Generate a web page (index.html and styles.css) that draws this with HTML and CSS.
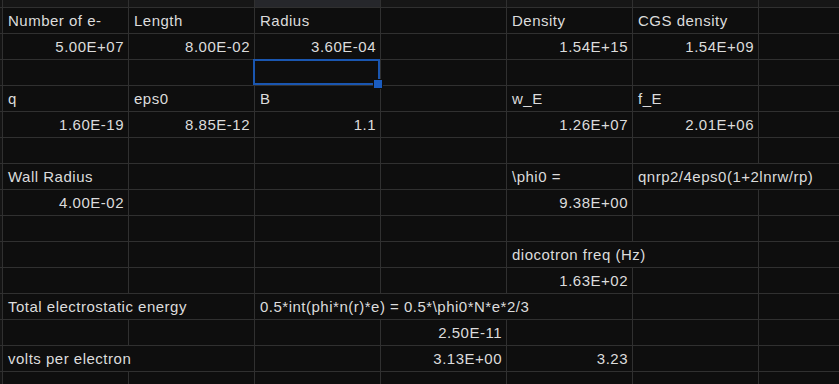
FILE: index.html
```html
<!DOCTYPE html>
<html lang="en">
<head>
    <meta charset="UTF-8">
    <meta name="viewport" content="width=device-width, initial-scale=1.0">
    <title>Electron plasma calc</title>
    <link rel="stylesheet" href="styles.css">
</head>
<body>
    <div class="sheet">
        <!-- column headers (only their bottom edge shows) -->
        <div class="rh"></div>
        <div class="ch"></div><div class="ch"></div><div class="ch sel"></div><div class="ch"></div><div class="ch"></div><div class="ch"></div><div class="ch"></div>

        <div class="rh"></div>
        <div class="c">Number of e-</div><div class="c">Length</div><div class="c">Radius</div><div class="c"></div><div class="c">Density</div><div class="c">CGS density</div><div class="c"></div>

        <div class="rh"></div>
        <div class="c n">5.00E+07</div><div class="c n">8.00E-02</div><div class="c n">3.60E-04</div><div class="c"></div><div class="c n">1.54E+15</div><div class="c n">1.54E+09</div><div class="c"></div>

        <div class="rh"></div>
        <div class="c"></div><div class="c"></div><div class="c active"></div><div class="c"></div><div class="c"></div><div class="c"></div><div class="c"></div>

        <div class="rh"></div>
        <div class="c">q</div><div class="c">eps0</div><div class="c">B</div><div class="c"></div><div class="c">w_E</div><div class="c">f_E</div><div class="c"></div>

        <div class="rh"></div>
        <div class="c n">1.60E-19</div><div class="c n">8.85E-12</div><div class="c n">1.1</div><div class="c"></div><div class="c n">1.26E+07</div><div class="c n">2.01E+06</div><div class="c"></div>

        <div class="rh"></div>
        <div class="c"></div><div class="c"></div><div class="c"></div><div class="c"></div><div class="c"></div><div class="c"></div><div class="c"></div>

        <div class="rh"></div>
        <div class="c">Wall Radius</div><div class="c"></div><div class="c"></div><div class="c"></div><div class="c">\phi0 =</div><div class="c s2">qnrp2/4eps0(1+2lnrw/rp)</div>

        <div class="rh"></div>
        <div class="c n">4.00E-02</div><div class="c"></div><div class="c"></div><div class="c"></div><div class="c n">9.38E+00</div><div class="c"></div><div class="c"></div>

        <div class="rh"></div>
        <div class="c"></div><div class="c"></div><div class="c"></div><div class="c"></div><div class="c"></div><div class="c"></div><div class="c"></div>

        <div class="rh"></div>
        <div class="c"></div><div class="c"></div><div class="c"></div><div class="c"></div><div class="c s2">diocotron freq (Hz)</div><div class="c"></div>

        <div class="rh"></div>
        <div class="c"></div><div class="c"></div><div class="c"></div><div class="c"></div><div class="c n">1.63E+02</div><div class="c"></div><div class="c"></div>

        <div class="rh"></div>
        <div class="c s2">Total electrostatic energy</div><div class="c s3">0.5*int(phi*n(r)*e) = 0.5*\phi0*N*e*2/3</div><div class="c"></div><div class="c"></div>

        <div class="rh"></div>
        <div class="c"></div><div class="c"></div><div class="c"></div><div class="c n">2.50E-11</div><div class="c"></div><div class="c"></div><div class="c"></div>

        <div class="rh"></div>
        <div class="c s2">volts per electron</div><div class="c"></div><div class="c n">3.13E+00</div><div class="c n">3.23</div><div class="c"></div><div class="c"></div>

        <div class="rh"></div>
        <div class="c"></div><div class="c"></div><div class="c"></div><div class="c"></div><div class="c"></div><div class="c"></div><div class="c"></div>
    </div>
</body>
</html>
```

FILE: styles.css
```css
html, body {
    margin: 0;
    background-color: #0e0e0e;
    overflow: hidden;
}
.sheet {
    display: grid;
    grid-template-columns: 3px repeat(7, 126px);
    grid-template-rows: 8px repeat(15, 26px);
    font-family: "Liberation Sans", Arial, sans-serif;
    font-size: 15px;
    letter-spacing: 0.5px;
    color: #dcdcdc;
}
.rh, .ch, .c {
    box-sizing: border-box;
    border-right: 1px solid #303030;
    border-bottom: 1px solid #303030;
}
.rh {
    background-color: #141414;
}
.ch {
    background-color: #161616;
}
.ch.sel {
    background-color: #26272b;
}
.c {
    position: relative;
    padding: 0 4px 0 5px;
    line-height: 25px;
    white-space: nowrap;
    overflow: hidden;
}
.n {
    text-align: right;
}
.s2 {
    grid-column: span 2;
}
.s3 {
    grid-column: span 3;
}
.active {
    overflow: visible;
}
.active::before {
    content: "";
    position: absolute;
    top: -1px;
    left: -2px;
    right: 0;
    bottom: 0;
    border: 2px solid #1a56b0;
}
.active::after {
    content: "";
    position: absolute;
    right: -3px;
    bottom: -4px;
    width: 8px;
    height: 8px;
    background-color: #1a5cc0;
    border: 1px solid #0e0e0e;
    z-index: 2;
}
```
